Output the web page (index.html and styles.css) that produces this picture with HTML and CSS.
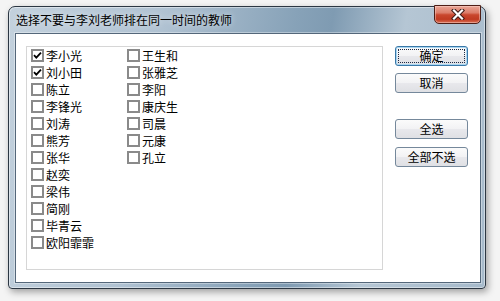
FILE: index.html
```html
<!DOCTYPE html>
<html lang="zh-CN">
<head>
<meta charset="utf-8">
<title>选择教师</title>
<link rel="stylesheet" href="styles.css">
</head>
<body>
<div class="window">
  <div class="titlebar">
    <span class="title">选择不要与李刘老师排在同一时间的教师</span>
    <div class="close">
      <svg width="14" height="11" viewBox="0 0 14 11">
        <path d="M3 1.5 L11 9.5 M11 1.5 L3 9.5" stroke="#3d1a14" stroke-width="4.2" stroke-linecap="square" fill="none"/>
        <path d="M3 1.5 L11 9.5 M11 1.5 L3 9.5" stroke="#ffffff" stroke-width="2.2" stroke-linecap="square" fill="none"/>
      </svg>
    </div>
  </div>
  <div class="client">
    <div class="listbox">
      <label class="item"><span class="cb"><svg width="9" height="9" viewBox="0 0 9 9"><path d="M1 4.2 L3.3 6.6 L8 1.6" stroke="#000" stroke-width="1.8" fill="none"/></svg></span><span>李小光</span></label>
      <label class="item"><span class="cb"><svg width="9" height="9" viewBox="0 0 9 9"><path d="M1 4.2 L3.3 6.6 L8 1.6" stroke="#000" stroke-width="1.8" fill="none"/></svg></span><span>刘小田</span></label>
      <label class="item"><span class="cb"></span><span>陈立</span></label>
      <label class="item"><span class="cb"></span><span>李锋光</span></label>
      <label class="item"><span class="cb"></span><span>刘涛</span></label>
      <label class="item"><span class="cb"></span><span>熊芳</span></label>
      <label class="item"><span class="cb"></span><span>张华</span></label>
      <label class="item"><span class="cb"></span><span>赵奕</span></label>
      <label class="item"><span class="cb"></span><span>梁伟</span></label>
      <label class="item"><span class="cb"></span><span>简刚</span></label>
      <label class="item"><span class="cb"></span><span>毕青云</span></label>
      <label class="item"><span class="cb"></span><span>欧阳霏霏</span></label>
      <label class="item"><span class="cb"></span><span>王生和</span></label>
      <label class="item"><span class="cb"></span><span>张雅芝</span></label>
      <label class="item"><span class="cb"></span><span>李阳</span></label>
      <label class="item"><span class="cb"></span><span>康庆生</span></label>
      <label class="item"><span class="cb"></span><span>司晨</span></label>
      <label class="item"><span class="cb"></span><span>元康</span></label>
      <label class="item"><span class="cb"></span><span>孔立</span></label>
    </div>
    <div class="buttons">
      <button class="btn default"><span class="focus">确定</span></button>
      <button class="btn gap-s">取消</button>
      <button class="btn gap-l">全选</button>
      <button class="btn gap-m">全部不选</button>
    </div>
  </div>
</div>
</body>
</html>
```
FILE: styles.css
```css
html, body {
  margin: 0;
  width: 500px;
  height: 301px;
  overflow: hidden;
}
body {
  box-sizing: border-box;
  padding: 6px 0 0 8px;
  background: #f4f4f4;
  font-family: "Noto Sans CJK SC", "Noto Sans", sans-serif;
  font-size: 12px;
  color: #000;
}
.window {
  box-sizing: border-box;
  width: 478px;
  height: 283px;
  border: 1px solid #2c3743;
  border-radius: 7px 7px 4px 4px;
  background:
    linear-gradient(100deg, #c3d1dd 0%, #b0c2d2 30%, #87a2b8 55%, #7f9bb2 62%, #b5c6d4 76%, #a6bacb 100%);
  display: flex;
  flex-direction: column;
  padding: 0 4px 5px 6px;
  box-shadow: 2px 3px 7px rgba(0,0,0,0.35), inset 0 0 0 1px rgba(255,255,255,0.45);
}
.titlebar {
  height: 26px;
  flex: none;
  display: flex;
  justify-content: space-between;
  align-items: center;
  padding-left: 1px;
}
.title {
  font-size: 12px;
  line-height: 16px;
  color: #000;
  text-shadow: 0 0 6px rgba(255,255,255,0.7);
}
.close {
  align-self: flex-start;
  box-sizing: border-box;
  width: 47px;
  height: 19px;
  margin-top: -2px;
  border: 1px solid #4e1e16;
  border-radius: 0 0 5px 5px;
  background: linear-gradient(#eaa798 0%, #dc7d69 40%, #c9472e 52%, #c03a21 78%, #d96e53 100%);
  box-shadow: inset 0 0 0 1px rgba(255,220,210,0.45);
  display: flex;
  align-items: center;
  justify-content: center;
}
.close svg { display: block; }
.client {
  flex: 1;
  display: flex;
  align-items: flex-start;
  gap: 12px;
  background: #fff;
  border: 1px solid #54677a;
  padding: 12px 12px 0 10px;
  box-shadow: 0 0 0 1px rgba(255,255,255,0.35);
}
.listbox {
  flex: none;
  box-sizing: border-box;
  width: 357px;
  height: 224px;
  border: 1px solid #d6d6d6;
  padding: 0 0 0 4px;
  display: grid;
  grid-auto-flow: column;
  grid-template-rows: repeat(12, 17px);
  grid-auto-columns: 96px;
  align-content: start;
  justify-content: start;
}
.item {
  display: flex;
  align-items: center;
  gap: 2px;
  height: 17px;
  line-height: 17px;
  white-space: nowrap;
}
.cb {
  box-sizing: border-box;
  width: 13px;
  height: 13px;
  border: 2px solid #8a8a8a;
  background: #fff;
  display: flex;
  align-items: center;
  justify-content: center;
  flex: none;
}
.cb svg { display: block; }
.buttons {
  flex: none;
  width: 73px;
  display: flex;
  flex-direction: column;
}
.btn {
  box-sizing: border-box;
  width: 73px;
  height: 20px;
  padding: 0;
  border: 1px solid #75889b;
  border-radius: 3px;
  background: linear-gradient(#fbfbfb 0%, #f2f2f4 50%, #e8e8ec 52%, #dfe0e4 100%);
  font-family: "Noto Sans CJK SC", "Noto Sans", sans-serif;
  font-size: 12px;
  line-height: 16px;
  color: #000;
  display: flex;
  align-items: center;
  justify-content: center;
}
.btn.default {
  border-color: #3a78a8;
  box-shadow: inset 0 0 0 1px #a8d6f2;
  padding: 2px;
}
.focus {
  flex: 1;
  align-self: stretch;
  border: 1px dotted #1d2a44;
  display: flex;
  align-items: center;
  justify-content: center;
}
.gap-s { margin-top: 7px; }
.gap-l { margin-top: 26px; }
.gap-m { margin-top: 8px; }
```
